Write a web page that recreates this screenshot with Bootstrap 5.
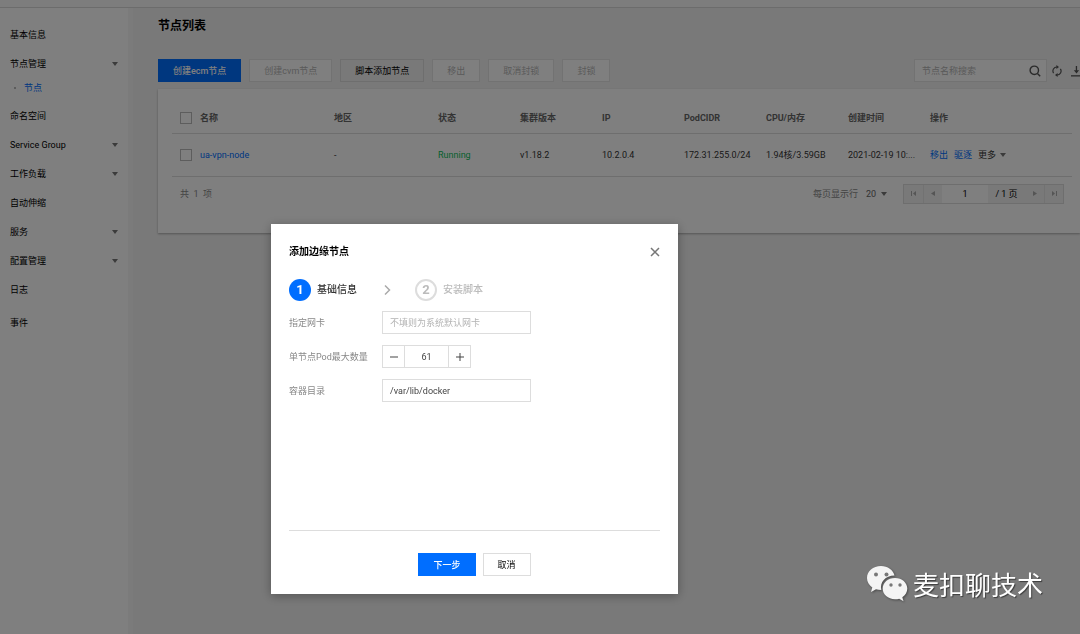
<!DOCTYPE html>
<html lang="zh-CN">
<head>
<meta charset="utf-8">
<meta name="viewport" content="width=device-width, initial-scale=1">
<title>节点列表</title>
<link href="https://cdn.jsdelivr.net/npm/bootstrap@5.3.0/dist/css/bootstrap.min.css" rel="stylesheet">
<style>
  :root { --brand: #006eff; --line: #ddd; }
  body { font: 9px/14px Roboto, "Noto Sans CJK SC", sans-serif; color: #000; background: #f2f2f2; overflow: hidden; }
  a { color: var(--brand); text-decoration: none; }
  svg { display: block; flex: none; }
  .topline { height: 8px; background: #fbfbfb; border-bottom: 1px solid #d8d8d8; }

  .side { width: 133px; padding-top: 12px; background: #fff; border-right: 5px solid #f6f6f6; }
  .side .nav-link { height: 29px; padding: 0 10px; color: #000; display: flex; align-items: center; justify-content: space-between; }
  .side .sub-link { height: 23px; padding: 0 0 4px 24px; color: var(--brand); justify-content: flex-start; position: relative; }
  .side .sub-link::before { content: ""; position: absolute; left: 14px; top: 9px; width: 2px; height: 2px; background: #bbb; }

  .page { padding-left: 25px; }
  .page h1 { font-size: 12px; line-height: 18px; font-weight: 700; margin: 9px 0 24px; }
  .btn { --bs-btn-border-radius: 0; --bs-btn-font-size: 9px; --bs-btn-line-height: 14px; --bs-btn-padding-y: 3px; --bs-btn-padding-x: 14px; white-space: nowrap; }
  .btn-main { --bs-btn-color: #fff; --bs-btn-bg: var(--brand); --bs-btn-border-color: var(--brand); --bs-btn-hover-bg: #005ad6; --bs-btn-hover-color: #fff; font-weight: 500; }
  .btn-plain { --bs-btn-color: #000; --bs-btn-bg: #fff; --bs-btn-border-color: var(--line); --bs-btn-hover-bg: #f2f2f2; --bs-btn-disabled-color: #b4b4b4; --bs-btn-disabled-bg: #fff; --bs-btn-disabled-border-color: #e4e4e4; --bs-btn-disabled-opacity: 1; }
  .btn-soft { --bs-btn-bg: #f2f2f2; }
  .tools { gap: 8px; margin-bottom: 7px; }
  .tools .btn { height: 23px; }
  .btn-bare { border: 0; padding: 0; background: none; color: inherit; }

  .form-control { border-radius: 0; border-color: var(--line); font-size: 9px; line-height: 14px; height: 23px; min-height: 0; padding: 3px 7px; color: #444; }
  .form-control::placeholder { color: #b4b4b4; }
  .search { width: 133px; border: 1px solid #e4e4e4; background: #fff; height: 23px; padding-right: 5px; }
  .search .form-control { border: 0; height: 21px; background: none; }
  .tail { gap: 9px; margin-right: -2px; }
  .tail-box { gap: 5px; }

  .panel { background: #fff; box-shadow: 0 1px 2px rgba(0,0,0,.3); padding: 14px 8px 29px 14px; }
  .nodes { table-layout: fixed; margin: 0; --bs-table-bg: transparent; }
  .nodes th, .nodes td { padding: 0; vertical-align: middle; border-bottom: 1px solid var(--line); white-space: nowrap; }
  .nodes th { height: 30px; color: #666; font-weight: 700; }
  .nodes td { height: 43px; color: #333; }
  .nodes .pick { padding-left: 8px; width: 28px; }
  .nodes .place { width: 104px; }
  .nodes .std { width: 82px; }
  .nodes .ops { width: 142px; }
  .nodes td.ok { color: #0abf5b; }
  .acts { gap: 6px; }
  .tick { appearance: none; display: block; width: 12px; height: 12px; margin: 0; border: 1px solid #bbb; background: #fff; }
  .tick:checked { background: var(--brand); }
  .foot { padding: 7px 8px 0; color: #888; }
  .foot select { appearance: none; border: 0; background: none; color: #666; padding: 0; width: 14px; }
  .foot svg.me-3 { margin-left: 1px; }
  .pager { height: 20px; border: 1px solid var(--line); background: #f2f2f2; color: #000; }
  .pager button { width: 19px; height: 18px; display: flex; align-items: center; justify-content: center; }
  .pager button + button { border-left: 1px solid #e4e4e4; }
  .pager input { width: 46px; height: 18px; border: 0; padding: 0; text-align: center; background: #fff; }
  .pager span { width: 37px; text-align: center; }

  .modal { display: block; padding-right: 131px; overflow: hidden; }
  .modal-dialog { width: 407px; max-width: none; margin: 224px auto 0; }
  .modal-content { border: 0; border-radius: 0; padding: 18px; box-shadow: 0 2px 10px rgba(0,0,0,.3); color: #000; }
  .modal-header, .modal-footer, .modal-body { padding: 0; border: 0; border-radius: 0; }
  .modal-title { font-size: 10px; line-height: 20px; font-weight: 700; }
  .modal-body { min-height: 268px; padding-top: 17px; }
  .modal-footer { border-top: 1px solid var(--line); padding-top: 22px; gap: 7px; justify-content: center; }
  .modal-footer .btn { margin: 0; height: 23px; }
  .steps { font-size: 10px; line-height: 22px; margin-bottom: 10px; font-weight: 500; color: #333; }
  .steps .arrow { margin: 0 24px 0 26px; }
  .dot { width: 22px; height: 22px; border-radius: 50%; background: var(--brand); color: #fff; text-align: center; font-size: 13px; font-weight: 700; margin-right: 6px; }
  .dot.next { background: none; border: 2px solid #ddd; line-height: 18px; color: #bbb; }
  .later { color: #bbb; }
  .field { margin-bottom: 11px; color: #888; }
  .field label { width: 93px; }
  .field .wide { width: 149px; }
  .stepper .btn { width: 23px; height: 23px; padding: 0; display: flex; align-items: center; justify-content: center; }
  .stepper .form-control { width: 45px; margin: 0 -1px; text-align: center; padding: 0; }

  .brand-mark { position: fixed; right: 37px; bottom: 31px; z-index: 1060; color: #fff; font: 400 26px/38px "Noto Sans CJK SC", sans-serif; gap: 5px; text-shadow: 1px 1px 1px rgba(0,0,0,.5); }
  .brand-mark svg { filter: drop-shadow(1px 1px 1px rgba(0,0,0,.4)); }
</style>
</head>
<body class="vh-100 d-flex flex-column">
<svg width="0" height="0" class="position-absolute" aria-hidden="true">
  <symbol id="down" viewBox="0 0 6 4"><path d="M0 0h6L3 4z" fill="#777"/></symbol>
</svg>

<header class="topline"></header>
<div class="d-flex flex-grow-1">
  <nav class="side nav flex-column flex-nowrap flex-shrink-0">
    <a class="nav-link" href="#">基本信息</a>
    <a class="nav-link" href="#">节点管理<svg width="6" height="4"><use href="#down"/></svg></a>
    <a class="nav-link sub-link" href="#">节点</a>
    <a class="nav-link" href="#">命名空间</a>
    <a class="nav-link" href="#">Service Group<svg width="6" height="4"><use href="#down"/></svg></a>
    <a class="nav-link" href="#">工作负载<svg width="6" height="4"><use href="#down"/></svg></a>
    <a class="nav-link" href="#">自动伸缩</a>
    <a class="nav-link" href="#">服务<svg width="6" height="4"><use href="#down"/></svg></a>
    <a class="nav-link" href="#">配置管理<svg width="6" height="4"><use href="#down"/></svg></a>
    <a class="nav-link" href="#">日志</a>
    <a class="nav-link mt-1" href="#">事件</a>
  </nav>

  <main class="page flex-grow-1 overflow-hidden">
    <h1>节点列表</h1>
    <div class="tools d-flex">
      <button class="btn btn-main" type="button">创建ecm节点</button>
      <button class="btn btn-plain" type="button" disabled>创建cvm节点</button>
      <button class="btn btn-plain btn-soft" type="button">脚本添加节点</button>
      <button class="btn btn-plain" type="button" disabled>移出</button>
      <button class="btn btn-plain" type="button" disabled>取消封锁</button>
      <button class="btn btn-plain" type="button" disabled>封锁</button>
      <div class="tail d-flex align-items-center ms-auto">
        <div class="tail-box d-flex align-items-center">
          <div class="search d-flex align-items-center">
            <input class="form-control" type="search" placeholder="节点名称搜索" aria-label="节点名称搜索">
            <button class="btn-bare" type="button" aria-label="搜索"><svg width="12" height="12" viewBox="0 0 12 12" fill="none" stroke="#555" stroke-width="1.4"><circle cx="5.3" cy="5.3" r="4.2"/><path d="M8.4 8.4l2.8 2.8"/></svg></button>
          </div>
          <button class="btn-bare" type="button" aria-label="刷新"><svg width="10" height="12" viewBox="0 0 10 12"><g fill="none" stroke="#555" stroke-width="1.2"><path d="M1.6 8.2A4 4 0 0 1 5 2"/><path d="M8.4 3.8A4 4 0 0 1 5 10"/></g><path d="M4.4 0l2.6 2-2.6 2zM5.6 8L3 10l2.6 2z" fill="#555"/></svg></button>
        </div>
        <button class="btn-bare" type="button" aria-label="下载"><svg width="11" height="12" viewBox="0 0 11 12"><path d="M0 10.2h11v1.3H0z" fill="#555"/><path d="M4.8 1h1.3v4.2h2L5.5 8.5 2.8 5.2h2z" fill="#555"/></svg></button>
      </div>
    </div>

    <section class="panel">
      <table class="table nodes">
        <thead>
          <tr>
            <th class="pick"><input class="tick" type="checkbox" aria-label="全选"></th>
            <th>名称</th><th class="place">地区</th><th class="std">状态</th><th class="std">集群版本</th><th class="std">IP</th><th class="std">PodCIDR</th><th class="std">CPU/内存</th><th class="std">创建时间</th><th class="ops">操作</th>
          </tr>
        </thead>
        <tbody>
          <tr>
            <td class="pick"><input class="tick" type="checkbox" aria-label="选择 ua-vpn-node"></td>
            <td><a href="#">ua-vpn-node</a></td><td>-</td><td class="ok">Running</td><td>v1.18.2</td><td>10.2.0.4</td><td>172.31.255.0/24</td><td>1.94核/3.59GB</td><td>2021-02-19 10:...</td>
            <td><div class="acts d-flex align-items-center"><a href="#">移出</a><a href="#">驱逐</a><button class="btn-bare d-flex align-items-center gap-1" type="button">更多<svg width="6" height="4"><use href="#down"/></svg></button></div></td>
          </tr>
        </tbody>
      </table>
      <div class="foot d-flex align-items-center">
        <span>共&nbsp; 1 &nbsp;项</span>
        <label class="ms-auto me-2" for="size">每页显示行</label>
        <select id="size"><option>20</option><option>50</option></select>
        <svg class="me-3" width="6" height="4"><use href="#down"/></svg>
        <div class="pager d-flex align-items-center">
          <button class="btn-bare" type="button" aria-label="首页"><svg width="6" height="5" viewBox="0 0 6 5"><path d="M0 0h1v5H0zM5 0v5L2 2.5z" fill="#aaa"/></svg></button>
          <button class="btn-bare" type="button" aria-label="上一页"><svg width="4" height="5" viewBox="0 0 4 5"><path d="M4 0v5L0 2.5z" fill="#aaa"/></svg></button>
          <input type="text" value="1" aria-label="页码">
          <span>/ 1 页</span>
          <button class="btn-bare" type="button" aria-label="下一页"><svg width="4" height="5" viewBox="0 0 4 5"><path d="M0 0v5l4-2.5z" fill="#aaa"/></svg></button>
          <button class="btn-bare" type="button" aria-label="末页"><svg width="6" height="5" viewBox="0 0 6 5"><path d="M5 0h1v5H5zM1 0v5l3-2.5z" fill="#aaa"/></svg></button>
        </div>
      </div>
    </section>
  </main>
</div>

<div class="modal-backdrop show"></div>
<div class="modal show" role="dialog" aria-labelledby="dialogTitle">
  <div class="modal-dialog">
    <form class="modal-content">
      <div class="modal-header">
        <h2 class="modal-title" id="dialogTitle">添加边缘节点</h2>
        <button class="btn-bare" type="button" aria-label="关闭"><svg width="10" height="10" viewBox="0 0 10 10" stroke="#777" stroke-width="1.5"><path d="M1 1l8 8M9 1L1 9"/></svg></button>
      </div>
      <div class="modal-body">
        <div class="steps d-flex align-items-center">
          <span class="dot">1</span><span>基础信息</span>
          <svg class="arrow" width="8" height="10" viewBox="0 0 8 10" fill="none" stroke="#aaa" stroke-width="1.5"><path d="M2 .5L6.500 5 2 9.500"/></svg>
          <span class="dot next">2</span><span class="later">安装脚本</span>
        </div>
        <div class="field d-flex align-items-center"><label for="nic">指定网卡</label><input class="form-control wide" id="nic" type="text" placeholder="不填则为系统默认网卡"></div>
        <div class="field d-flex align-items-center"><label for="pods">单节点Pod最大数量</label>
          <div class="stepper d-flex">
            <button class="btn btn-plain" type="button" aria-label="减少"><svg width="8" height="8" viewBox="0 0 8 8"><path d="M0 3.500h8v1H0z" fill="#444"/></svg></button>
            <input class="form-control" id="pods" type="text" value="61">
            <button class="btn btn-plain" type="button" aria-label="增加"><svg width="8" height="8" viewBox="0 0 8 8"><path d="M0 3.500h8v1H0zM3.500 0h1v8h-1z" fill="#444"/></svg></button>
          </div>
        </div>
        <div class="field d-flex align-items-center"><label for="dir">容器目录</label><input class="form-control wide" id="dir" type="text" value="/var/lib/docker"></div>
      </div>
      <div class="modal-footer">
        <button class="btn btn-main" type="button">下一步</button>
        <button class="btn btn-plain" type="button">取消</button>
      </div>
    </form>
  </div>
</div>

<div class="brand-mark d-flex align-items-center">
  <svg width="42" height="38" viewBox="0 0 42 38" fill="#f4f4f4">
    <path d="M15 1C7 1 1 6.300 1 13c0 3.900 2 7.200 5.300 9.500L5 27l5-2.700c1.700.5 3.300.7 5.300.7-1.800-7.500 4-14.500 13.200-14.500C27.200 5 21.700 1 15 1z"/>
    <path d="M29 13c-7 0-12.300 4.700-12.300 10.600S22 34.300 29 34.300c1.500 0 2.900-.2 4.200-.6l4.300 2.500-1.200-4c3.100-2 5-5 5-8.600C41.300 17.700 36 13 29 13z"/>
    <g fill="#787878"><circle cx="10" cy="9.500" r="2"/><circle cx="20.500" cy="9.500" r="2"/><circle cx="25" cy="20" r="1.700"/><circle cx="34" cy="20" r="1.700"/></g>
  </svg>
  <span>麦扣聊技术</span>
</div>
<script src="https://cdn.jsdelivr.net/npm/bootstrap@5.3.0/dist/js/bootstrap.bundle.min.js"></script>
</body>
</html>
